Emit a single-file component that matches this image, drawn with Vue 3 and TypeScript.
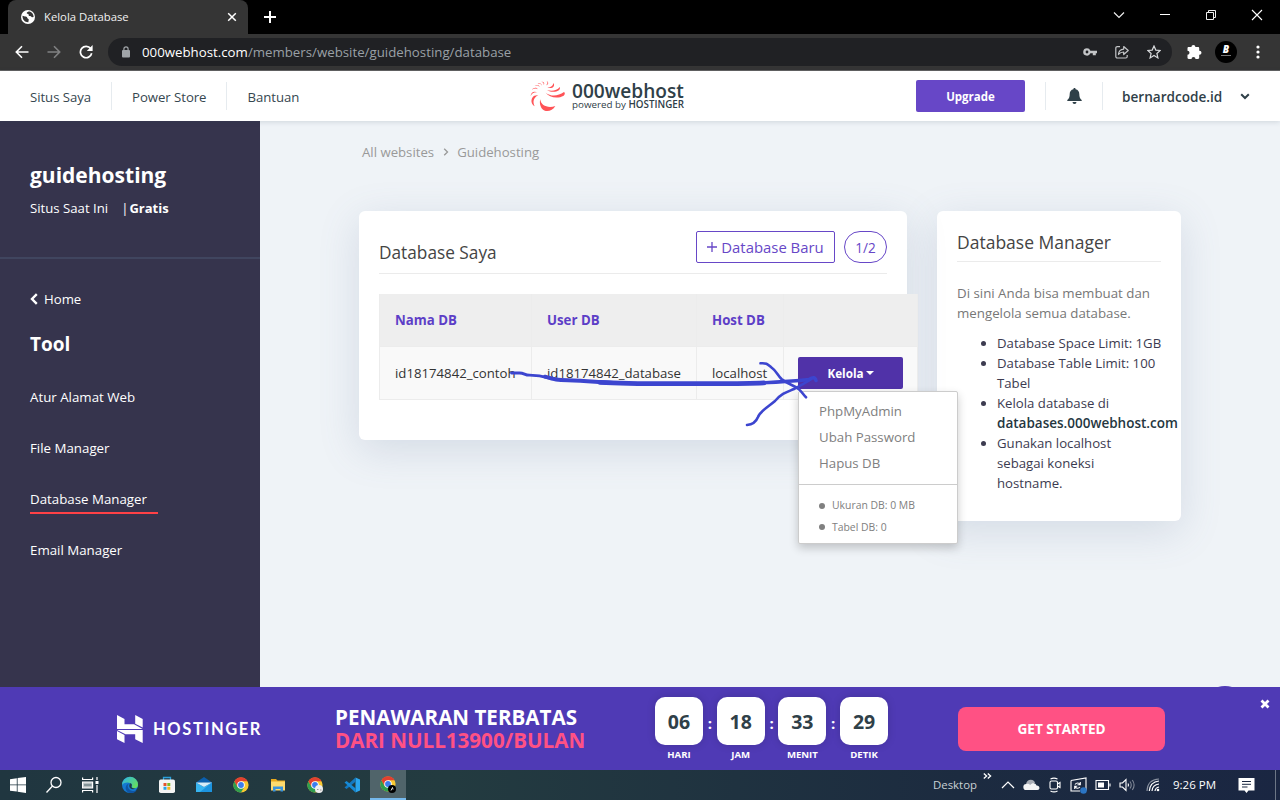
<script setup lang="ts">
import { ref } from 'vue'

interface Unit {
  value: string
  label: string
}

const navLinks = ['Situs Saya', 'Power Store', 'Bantuan']
const tools = ['Atur Alamat Web', 'File Manager', 'Database Manager', 'Email Manager']
const activeTool = ref('Database Manager')
const menuOpen = ref(true)

const columns = ['Nama DB', 'User DB', 'Host DB', '']
const database = { name: 'id18174842_contoh', user: 'id18174842_database', host: 'localhost' }
const actions = ['PhpMyAdmin', 'Ubah Password', 'Hapus DB']
const stats = ['Ukuran DB: 0 MB', 'Tabel DB: 0']

const countdown: Unit[] = [
  { value: '06', label: 'HARI' },
  { value: '18', label: 'JAM' },
  { value: '33', label: 'MENIT' },
  { value: '29', label: 'DETIK' },
]
</script>

<template>
  <div class="screen">
    <svg class="defs" width="0" height="0">
      <symbol id="chrome" viewBox="0 0 16 16">
        <circle cx="8" cy="8" r="7.6" fill="#f9c932" />
        <path d="M8 8 1.4 4.2A7.6 7.6 0 0 1 14.6 4.2H8z" fill="#e2402f" />
        <path d="M1.4 4.2A7.6 7.6 0 0 0 8 15.6l3.3-5.7L8 8 4.7 9.9z" fill="#2f9e4f" />
        <path d="M1.4 4.2 4.7 9.9 8 4.2z" fill="#e2402f" />
        <circle cx="8" cy="8" r="3.8" fill="#fff" />
        <circle cx="8" cy="8" r="2.9" fill="#3b7ded" />
      </symbol>
    </svg>

    <div class="tabs">
      <div class="tab">
        <svg width="14" height="14" viewBox="0 0 14 14">
          <circle cx="7" cy="7" r="7" fill="#fff" />
          <path d="M1.500 5.800 4 6.600c1.500 0 2.300.5 2.200 1.500L7.800 9.500 7.300 12.300C3.800 12.400 1.300 9.500 1.500 5.800z" fill="#353535" />
          <path d="M7.500 1.600c-1 .7-2 .8-1.700 1.900.9.6 1.900.3 1.900 1.200-.3.900.3 1.400 1.500 1.400.9 0 1 1.200 1.900 1.200l1.500-.3C12.500 4 10.500 1.500 7.500 1.600z" fill="#353535" />
        </svg>
        <span class="tab__title">Kelola Database</span>
        <svg class="tab__close" width="10" height="10" viewBox="0 0 10 10">
          <path d="M1.200 1.200 8.800 8.800M8.800 1.200 1.200 8.800" stroke="#fff" stroke-width="1.500" />
        </svg>
      </div>
      <svg class="tabs__new" width="12" height="12" viewBox="0 0 12 12">
        <path d="M6 0v12M0 6h12" stroke="#fff" stroke-width="2" />
      </svg>
      <div class="window-controls">
        <svg width="12" height="12" viewBox="0 0 12 12"><path d="m1 3.500 5 5 5-5" fill="none" stroke="#eee" stroke-width="1.200" /></svg>
        <svg width="12" height="12" viewBox="0 0 12 12"><path d="M1 5.500h10" stroke="#fff" /></svg>
        <svg width="12" height="12" viewBox="0 0 12 12"><path d="M1.500 3.500h7v7h-7zM3.500 3V1.500h7v7H9" fill="none" stroke="#eee" /></svg>
        <svg width="12" height="12" viewBox="0 0 12 12"><path d="m1 1 10 10M11 1 1 11" stroke="#fff" stroke-width="1.100" /></svg>
      </div>
    </div>

    <div class="toolbar">
      <svg width="14" height="14" viewBox="0 0 14 14"><path d="M13.500 7H1.500M7 1.300 1.300 7 7 12.700" fill="none" stroke="#fff" stroke-width="1.600" /></svg>
      <svg width="14" height="14" viewBox="0 0 14 14"><path d="M.5 7h12M7 1.300 12.700 7 7 12.700" fill="none" stroke="#808182" stroke-width="1.600" /></svg>
      <svg width="14" height="14" viewBox="0 0 14 14">
        <path d="M11.700 3.600A5.700 5.700 0 1 0 12.700 8.200" fill="none" stroke="#fff" stroke-width="1.700" />
        <path d="M13.600 0v6H7.800z" fill="#fff" />
      </svg>
      <div class="omnibox">
        <svg class="omnibox__lock" width="8" height="12" viewBox="0 0 8 12">
          <rect y="4" width="8" height="7.500" rx="1" fill="#a0a4a8" />
          <path d="M1.900 4.500V3a2.100 2.100 0 0 1 4.200 0v1.500" fill="none" stroke="#a0a4a8" stroke-width="1.200" />
        </svg>
        <span class="omnibox__url"><b>000webhost.com</b>/members/website/guidehosting/database</span>
        <div class="omnibox__icons">
          <svg width="14" height="14" viewBox="0 0 14 14">
            <path d="M4 3.300a3.700 3.700 0 1 0 3.400 5H9.800v2h3V8.300H14V5.700H7.400A3.700 3.700 0 0 0 4 3.300zm0 2.300a1.400 1.400 0 1 1 0 2.800 1.400 1.400 0 0 1 0-2.800z" fill="#c3c5c7" fill-rule="evenodd" />
          </svg>
          <svg width="14" height="14" viewBox="0 0 14 14" fill="none" stroke="#c3c5c7" stroke-width="1.200">
            <path d="M5 1.600H2.300A1.500 1.500 0 0 0 .8 3.100v8.400A1.500 1.500 0 0 0 2.300 13h8.400a1.500 1.500 0 0 0 1.500-1.500V10" />
            <path d="M3.500 9.500C3.700 6 5.500 4.300 8.700 4.100V1.500l4.500 4-4.500 4V7C6.400 7 4.900 7.700 3.500 9.500z" stroke-linejoin="round" />
          </svg>
          <svg width="14" height="14" viewBox="0 0 14 14">
            <path d="m7 1 1.800 4.100 4.400.4-3.300 3 1 4.400L7 10.500 3.100 12.900l1-4.400-3.300-3 4.400-.4z" fill="none" stroke="#d8dadc" stroke-width="1.200" />
          </svg>
        </div>
      </div>
      <svg width="16" height="16" viewBox="0 0 16 16">
        <path d="M1.500 4.200c0-.7.500-1.200 1.200-1.200h2.700a2 2 0 0 1 4 0h2.600c.7 0 1.200.5 1.200 1.200v2.600h.3a2 2 0 0 1 0 4h-.3v3c0 .7-.5 1.200-1.200 1.200H9.500a2 2 0 0 0-4 0H2.700c-.7 0-1.200-.5-1.200-1.200v-3a2 2 0 0 0 0-4z" fill="#fff" />
      </svg>
      <div class="avatar"><i>B</i><small></small></div>
      <svg width="4" height="14" viewBox="0 0 4 14" fill="#fff"><circle cx="2" cy="2" r="1.600" /><circle cx="2" cy="7" r="1.600" /><circle cx="2" cy="12" r="1.600" /></svg>
    </div>

    <header class="header">
      <nav class="header__nav">
        <a v-for="link in navLinks" :key="link">{{ link }}</a>
      </nav>
      <div class="brand">
        <svg width="36" height="32" viewBox="90 30 108 96" fill="#ff5357">
          <path d="M137 68c15 12 37 11 55-2 4 3 3 8-1 11-18 10-43 6-54-9z" />
          <path d="M121 88c1 20 24 27 45 20-9 16-30 20-40 8-6-8-8-19-5-28z" />
          <path d="M115 76c-14 6-18 19-11 33-10-6-12-18-7-26 4-6 10-8 18-7z" />
          <path d="M112 67c-10-1-17 3-20 12 0-10 8-17 20-12z" />
          <path d="M114 58c-6-4-12-3-18 1 5-7 14-8 18-1z" />
          <path d="M119 51c-3-5-9-6-15-3 6-5 14-4 15 3z" />
          <path d="M125 47c-1-4-6-7-12-6 6-4 13 0 12 6z" />
          <path d="M131 45c1-5-1-8-7-10 8 0 11 5 7 10z" />
          <path d="M138 46c5-4 6-8 2-13 7 4 6 11-2 13z" />
          <path d="M142 53c11-1 17-5 18-14 7 9-3 19-18 14z" />
          <path d="M141 60c14 5 30 2 38-9 6 13-22 20-38 9z" />
        </svg>
        <div class="brand__text">
          <strong>000webhost</strong>
          <span>powered by <b>HOSTINGER</b></span>
        </div>
      </div>
      <div class="header__right">
        <button class="upgrade" type="button">Upgrade</button>
        <div class="bell">
          <svg width="15" height="16" viewBox="0 0 15 16" fill="#2f4048">
            <path d="M7.500 0c.7 0 1.100.5 1.100 1.200 2.400.5 3.700 2.400 3.700 4.800 0 3.200.8 4.700 2.400 6v1H.3v-1c1.600-1.300 2.400-2.800 2.400-6 0-2.400 1.300-4.300 3.700-4.800C6.400.5 6.800 0 7.500 0zM5.500 14h4a2 2 0 0 1-4 0z" />
          </svg>
        </div>
        <div class="account">
          <span>bernardcode.id</span>
          <svg width="10" height="7" viewBox="0 0 10 7"><path d="m1.200 1.200 3.800 3.800 3.800-3.800" fill="none" stroke="#2f4048" stroke-width="2" /></svg>
        </div>
      </div>
    </header>

    <div class="body">
      <aside class="sidebar">
        <div class="sidebar__site">
          <h1>guidehosting</h1>
          <p><span>Situs Saat Ini</span><span class="plan">|<b>Gratis</b></span></p>
        </div>
        <div class="sidebar__home">
          <svg width="8" height="12" viewBox="0 0 8 12"><path d="M6.800 1.200 2 6l4.800 4.800" fill="none" stroke="#fff" stroke-width="2.400" /></svg>
          <span>Home</span>
        </div>
        <h2>Tool</h2>
        <ul class="sidebar__tools">
          <li v-for="tool in tools" :key="tool">
            <a :class="{ active: tool === activeTool }" @click="activeTool = tool">{{ tool }}</a>
          </li>
        </ul>
      </aside>

      <main class="main">
        <div class="crumbs">
          <span>All websites</span>
          <svg width="6" height="8" viewBox="0 0 6 8"><path d="m1.200.8 3.300 3.200-3.300 3.200" fill="none" stroke="#999" stroke-width="1.300" /></svg>
          <span>Guidehosting</span>
        </div>
        <div class="cards">
          <section class="card card--list">
            <div class="card__head">
              <h3>Database Saya</h3>
              <button class="add" type="button">
                <svg width="10" height="10" viewBox="0 0 10 10"><path d="M5 0v10M0 5h10" stroke="#6747c7" stroke-width="1.300" /></svg>
                <span>Database Baru</span>
              </button>
              <span class="quota">1/2</span>
            </div>
            <div class="table">
              <div class="table__row table__row--head">
                <div v-for="column in columns" :key="column">{{ column }}</div>
              </div>
              <div class="table__row">
                <div>{{ database.name }}</div>
                <div>{{ database.user }}</div>
                <div>{{ database.host }}</div>
                <div class="manage">
                  <button class="manage__button" type="button" @click="menuOpen = !menuOpen">
                    Kelola
                    <svg width="8" height="4" viewBox="0 0 8 4"><path d="M0 0h8L4 4z" fill="#fff" /></svg>
                  </button>
                  <div v-if="menuOpen" class="menu">
                    <ul class="menu__actions">
                      <li v-for="action in actions" :key="action">{{ action }}</li>
                    </ul>
                    <ul class="menu__stats">
                      <li v-for="stat in stats" :key="stat">{{ stat }}</li>
                    </ul>
                  </div>
                </div>
              </div>
            </div>
          </section>

          <section class="card card--info">
            <h3>Database Manager</h3>
            <p>Di sini Anda bisa membuat dan<br>mengelola semua database.</p>
            <ul>
              <li>Database Space Limit: 1GB</li>
              <li>Database Table Limit: 100<br>Tabel</li>
              <li>Kelola database di<br><b>databases.000webhost.com</b></li>
              <li>Gunakan localhost<br>sebagai koneksi<br>hostname.</li>
            </ul>
          </section>
        </div>
        <div class="chat"></div>
      </main>
    </div>

    <section class="promo">
      <div class="promo__brand">
        <svg width="26" height="28" viewBox="0 0 26 28" fill="#fff">
          <path d="M0 0 7.500 4v5.300h9.500L25.700 14H0zM18.200 0l7.500 4v8.500L18.200 8.800zM0 15h17l8.700 0v13l-7.500-3.800V19.200H8.500z" />
          <path d="M0 16l7.500 4v8L0 24.200z" />
        </svg>
        <span>HOSTINGER</span>
      </div>
      <div class="promo__text">
        <span>PENAWARAN TERBATAS</span>
        <em>DARI NULL13900/BULAN</em>
      </div>
      <div class="countdown">
        <div v-for="unit in countdown" :key="unit.label" class="countdown__unit">
          <strong>{{ unit.value }}</strong>
          <span>{{ unit.label }}</span>
        </div>
      </div>
      <button class="promo__cta" type="button">GET STARTED</button>
      <svg class="promo__close" width="10" height="10" viewBox="0 0 10 10"><path d="m1.500 1.500 7 7M8.500 1.500l-7 7" stroke="#fff" stroke-width="2.800" /></svg>
    </section>

    <footer class="taskbar">
      <div class="taskbar__apps">
        <div class="app">
          <svg width="18" height="18" viewBox="0 0 18 18" fill="#fff"><path d="M1 3.200 7.800 2.200v6.300H1zM8.600 2.100 17 .900v7.600H8.600zM1 9.300h6.800v6.300L1 14.700zM8.600 9.300H17v7.600l-8.400-1.200z" /></svg>
        </div>
        <div class="app">
          <svg width="18" height="18" viewBox="0 0 18 18" fill="none" stroke="#fff" stroke-width="1.300"><circle cx="11" cy="6.500" r="5" /><path d="m7.500 10-6 6.500" /></svg>
        </div>
        <div class="app">
          <svg width="18" height="18" viewBox="0 0 18 18" fill="none" stroke="#fff" stroke-width="1.200">
            <path d="M1.600 1.500v2h10v-2M1.600 16.500v-2h10v2M16 1v3M16 9v8" /><path d="M1.600 6h10v6h-10z" fill="#b8c0c2" /><path d="M3 9h7.500" stroke="#60757c" /><path d="M14.500 6.500h3" stroke-width="3" />
          </svg>
        </div>
        <div class="app">
          <svg width="18" height="18" viewBox="0 0 18 18">
            <defs>
              <linearGradient id="edge-top" x1="0" x2="1" y1="0" y2=".6"><stop offset="0" stop-color="#2bb2ee" /><stop offset="1" stop-color="#64dc61" /></linearGradient>
            </defs>
            <circle cx="9" cy="9" r="8" fill="#1479d1" />
            <path d="M1 9a8 8 0 0 1 16-.3c.1 2.700-2 3.800-4.300 3.500-2.400-.3-1.600-1.500-1.600-3.200C10.800 6.700 4.200 5 1 9z" fill="url(#edge-top)" />
            <path d="M9.500 6.900c-3.600.4-4.300 6.300 2 8 1.700.3 3.200-.1 4.300-.6C13 18 8 17.800 5.800 15.200 3.500 12 4.800 7.600 9.500 6.900z" fill="#0f55a4" />
            <path d="M9.600 7.300c1.300.7 1.500 1.600.9 2.800-.6 1.200.7 2.600 3.700 2.500-2.300 1.500-5.700 0-5.900-2.400-.1-1.200.4-2.200 1.300-2.900z" fill="#233b40" />
          </svg>
        </div>
        <div class="app">
          <svg width="18" height="18" viewBox="0 0 18 18">
            <path d="M5.500 4V1.500h7V4" fill="none" stroke="#2ba0dc" stroke-width="1.300" /><rect x="1" y="3.500" width="16" height="13.500" rx="1.800" fill="#f4f4f4" />
            <path d="M5.500 7h3v3h-3z" fill="#e6532c" /><path d="M9.300 7h3v3h-3z" fill="#7fb927" /><path d="M5.500 10.800h3v3h-3z" fill="#2aa2e6" /><path d="M9.300 10.800h3v3h-3z" fill="#f7b51b" />
          </svg>
        </div>
        <div class="app">
          <svg width="18" height="18" viewBox="0 0 18 18">
            <path d="M1 6.500 9 1l8 5.500v5H1z" fill="#0b5fae" /><path d="M3 6.500h12v5H3z" fill="#0f4f94" /><path d="M1 6.500 9 11l8-4.500V16H1z" fill="#37b4f0" /><path d="M1 6.500h16L9 11z" fill="#d6ecf8" /><path d="M17 6.500 5 16h12z" fill="#1c93df" />
          </svg>
        </div>
        <div class="app"><svg width="16" height="16"><use href="#chrome" /></svg></div>
        <div class="app">
          <svg width="16" height="16" viewBox="0 0 16 16"><path d="M1 2h5l1.500 1.500H15V13H1z" fill="#e9a91c" /><path d="M1 4.500h14V13.500H1z" fill="#fddb6e" /><path d="M3 14.500V9.500h10v5h-2.500V12h-5v2.500z" fill="#3894dd" /></svg>
        </div>
        <div class="app">
          <svg width="16" height="16"><use href="#chrome" /></svg>
          <svg class="app__badge" width="8" height="8" viewBox="0 0 8 8"><circle cx="4" cy="4" r="4" fill="#eee" /><path d="M2 4.500h1.500M5 5h1.500" stroke="#999" /></svg>
        </div>
        <div class="app">
          <svg width="18" height="18" viewBox="0 0 18 18">
            <path d="M12.500 1.500 17 3.500v11l-4.500 2z" fill="#2aa5ee" /><path d="M12.500 1.500v4.300L3.600 13 1.500 11.500z" fill="#1478c0" /><path d="M12.500 16.500v-4.300L3.600 5 1.500 6.500z" fill="#168ad6" />
          </svg>
        </div>
        <div class="app app--active">
          <svg width="16" height="16"><use href="#chrome" /></svg>
          <svg class="app__badge" width="8" height="8" viewBox="0 0 8 8"><circle cx="4" cy="4" r="4" fill="#000" /><path d="M3 5.500 4.500 2.500 5 4.500" stroke="#ddd" fill="none" /></svg>
        </div>
      </div>
      <div class="tray">
        <span class="tray__desktop">Desktop</span>
        <svg class="tray__more" width="9" height="6" viewBox="0 0 9 6"><path d="m.8.500 2.800 2.500L.8 5.500M4.800.5l2.800 2.500-2.800 2.500" fill="none" stroke="#fff" stroke-width="1.300" /></svg>
        <svg width="14" height="14" viewBox="0 0 14 14"><path d="m1 10 6-6 6 6" fill="none" stroke="#fff" stroke-width="1.200" /></svg>
        <svg width="17" height="14" viewBox="0 0 17 14"><path d="M3.500 8A4.500 4.500 0 0 1 12 4.500L8 9z" fill="#a9adb5" /><path d="M3.500 12a3 3 0 0 1-.3-6c1.500-.6 3 0 4 1 2-2.500 5.500-2 6.300.5 3.500-.2 4 4.300.8 4.500z" fill="#f4f4f4" /></svg>
        <svg width="14" height="16" viewBox="0 0 14 16" fill="none" stroke="#fff" stroke-width="1.100"><rect x="2" y="4" width="7.500" height="8" rx="1.500" /><path d="M9.500 7 12 5.500v5L9.500 9M2.500 2Q6 .2 9.500 2M2.500 14Q6 15.800 9.500 14" /></svg>
        <svg width="17" height="17" viewBox="0 0 17 17" fill="none" stroke="#fff" stroke-width="1.100">
          <path d="M1 3.500 16 1v12.500M1 3.500V14h9" /><path d="M5 7.500c1.500-2 4-2 5 0M10.300 5v2.800H7.500M10 10c-1.500 1.800-4 1.500-5-.5M4.700 12V9.200h2.500" /><circle cx="13.500" cy="13.500" r="3.300" fill="#2b75c4" stroke="none" />
        </svg>
        <svg width="16" height="12" viewBox="0 0 16 12"><path d="M1 1.500h12.500v9H1zM15 4.500v3" fill="none" stroke="#fff" stroke-width="1.100" /><path d="M3 3.500h6v5H3z" fill="#fff" /></svg>
        <svg width="17" height="14" viewBox="0 0 17 14" fill="none" stroke="#fff" stroke-width="1.100"><path d="M1 5h2.500L7 1.500v11L3.500 9H1z" /><path d="M9 5.500q1 1.500 0 3" /><path d="M11 3.500q2.500 3.500 0 7M13.300 2q3.600 5 0 10" stroke="#7f8795" /></svg>
        <svg class="tray__wifi" width="14" height="14" viewBox="0 0 14 14" fill="none" stroke="#fff" stroke-width="1.200"><path d="M9 13q.5-3.500 4-4M6 13q.5-6.300 7-7M3.300 13Q4 4 13 3" /><path d="M1 13Q1.500 1.500 13 1" stroke="#8a92a0" /><circle cx="12" cy="12" r="1.300" fill="#fff" stroke="none" /></svg>
        <span class="tray__clock">9:26 PM</span>
        <svg width="17" height="17" viewBox="0 0 17 17"><path d="M.5 1h16v12.500H10.500L8.500 16l-2-2.500h-6z" fill="#fff" /><path d="M4 4.500h9M4 7.300h9M4 10h5.500" stroke="#1b2842" /></svg>
      </div>
    </footer>

    <!-- hand-drawn arrow pointing at the Kelola button -->
    <svg class="scribble" width="320" height="80" viewBox="505 355 320 80" fill="none" stroke="#3c45cf" stroke-linecap="round" stroke-linejoin="round">
      <path d="M511.500 373h8c5 0 5 2.200 10 2.200 8 0 11 .3 20 3" stroke-width="2.800" />
      <path d="M545 376.700c10 3 12 3.500 23 3.500 20 .5 30 2 50 2.800" stroke-width="4" />
      <path d="M600 382.300c30 1.800 60 1.300 100 1.300 25 0 45 .2 64-.8" stroke-width="4.800" />
      <path d="M760 383c20-1 35-2 49-3.500 4-2.500 6-2.500 7 1" stroke-width="3.400" />
      <path d="M760.500 363.300c6-.5 7 .8 11 4.200 5 3.500 6 7.500 10 11.500 5 4.500 11 5.500 17 10 3 2 4 5 7.500 8.300" stroke-width="2.600" />
      <path d="M747 425c6-.5 9-3 11-8 2-6 10-10 17-16 7-8 12-9 19-12 7-4 12-6 17-10" stroke-width="2.600" />
    </svg>
  </div>
</template>

<style>
body {
  margin: 0;
  overflow: hidden;
}
</style>

<style scoped>
* {
  box-sizing: border-box;
}

.screen {
  position: relative;
  display: flex;
  flex-direction: column;
  width: 1280px;
  height: 800px;
  overflow: hidden;
  font-family: "Open Sans", "Noto Sans", sans-serif;
  font-size: 13.200px;
  line-height: 20px;
  white-space: nowrap;
}

.defs {
  position: absolute;
}

svg {
  display: block;
  flex-shrink: 0;
}

h1, h2, h3, p, ul {
  margin: 0;
  padding: 0;
}

ul {
  list-style: none;
}

button {
  border: none;
  padding: 0;
  font-family: inherit;
  line-height: inherit;
  cursor: pointer;
}

/* browser chrome */
.tabs {
  display: flex;
  flex-shrink: 0;
  height: 34px;
  padding-left: 8px;
  background: #000;
}

.tab {
  display: flex;
  align-items: center;
  width: 240px;
  padding: 0 11px 0 13px;
  background: #353535;
  border-radius: 8px 8px 0 0;
}

.tab__title {
  flex: 1;
  margin-left: 9px;
  font-size: 11.300px;
  color: #f1f1f1;
}

.tabs__new {
  margin: 11px 0 0 16px;
}

.window-controls {
  display: flex;
  gap: 34px;
  margin: 9px 17px 0 auto;
}

.toolbar {
  display: flex;
  flex-shrink: 0;
  align-items: center;
  height: 37px;
  padding: 0 20px 1px 15px;
  background: #353535;
  border-bottom: 1px solid #626262;
}

.toolbar > svg + svg {
  margin-left: 18px;
}

.omnibox {
  display: flex;
  align-items: center;
  width: 1064px;
  height: 28px;
  margin: 0 14px 0 15px;
  padding: 0 11px 0 14px;
  border-radius: 14px;
  background: #202124;
}

.omnibox__url {
  margin-left: 12px;
  color: #9aa0a6;
  font-size: 13.280px;
}

.omnibox__url b {
  font-weight: 400;
  color: #fff;
}

.omnibox__icons {
  display: flex;
  gap: 18px;
  margin-left: auto;
}

.avatar {
  display: flex;
  flex-direction: column;
  align-items: center;
  width: 22px;
  height: 22px;
  margin: 0 19px 0 13px;
  padding-top: 3px;
  border-radius: 50%;
  background: #000;
  color: #fff;
  font-size: 10px;
  font-weight: 800;
  line-height: 10px;
}

.avatar small {
  width: 10px;
  height: 1px;
  margin-top: 1px;
  background: #777;
}

/* site header */
.header {
  position: relative;
  z-index: 1;
  display: flex;
  flex-shrink: 0;
  align-items: center;
  height: 50px;
  background: #fff;
  box-shadow: 0 1px 5px rgba(40, 60, 80, 0.16);
  color: #36474f;
}

.header__nav {
  display: flex;
  width: 530px;
  padding-left: 10px;
}

.header__nav a {
  padding: 5px 20px 3px;
  font-size: 13.200px;
  letter-spacing: -0.050px;
}

.header__nav a + a {
  border-left: 1px solid #e6ebef;
}

.brand {
  display: flex;
  align-items: center;
  width: 386px;
  gap: 6px;
}

.brand__text {
  display: flex;
  flex-direction: column;
  color: #2f4048;
}

.brand__text strong {
  font-size: 19.100px;
  font-weight: 600;
  line-height: 17px;
}

.brand__text span {
  font-size: 9.800px;
  line-height: 10px;
}

.brand__text b {
  font-weight: 600;
}

.header__right {
  display: flex;
  flex: 1;
  align-items: center;
}

.upgrade {
  width: 109px;
  height: 32px;
  padding-top: 1px;
  border-radius: 2px;
  background: #6747c7;
  color: #fff;
  font-size: 11.500px;
  font-weight: 700;
}

.bell {
  display: flex;
  align-items: center;
  justify-content: center;
  width: 58px;
  height: 28px;
  margin-left: 20px;
  border: solid #e6ebef;
  border-width: 0 1px;
}

.account {
  display: flex;
  flex: 1;
  align-items: center;
  justify-content: space-between;
  padding: 1px 30px 0 19px;
  font-weight: 600;
  font-size: 13.600px;
  color: #2f4048;
}

/* page body */
.body {
  display: flex;
  flex-shrink: 0;
  height: 566px;
}

.sidebar {
  width: 260px;
  flex-shrink: 0;
  background: #36344d;
  color: #fff;
}

.sidebar__site {
  height: 138px;
  padding: 39px 30px 0;
  border-bottom: 2px solid #40455f;
}

.sidebar h1 {
  font-size: 21px;
  line-height: 30px;
  font-weight: 700;
}

.sidebar__site p {
  display: flex;
  gap: 13px;
  margin-top: 8px;
}

.plan b {
  margin-left: 1px;
  font-size: 13px;
}

.sidebar__home {
  display: flex;
  align-items: center;
  gap: 6px;
  margin: 30px 30px 0;
}

.sidebar h2 {
  margin: 20px 30px 0;
  font-size: 19px;
  line-height: 30px;
  font-weight: 700;
}

.sidebar__tools {
  display: flex;
  flex-direction: column;
  gap: 25px;
  margin: 25px 30px 0;
}

.sidebar__tools li {
  height: 26px;
  font-size: 13.300px;
}

.sidebar__tools a {
  display: inline-block;
  height: 26px;
  line-height: 26px;
}

.sidebar__tools .active {
  width: 128px;
  height: 28px;
  border-bottom: 2px solid #ff4146;
}

.main {
  position: relative;
  flex: 1;
  overflow: hidden;
  background: #eff3f7;
}

.crumbs {
  display: flex;
  align-items: center;
  gap: 8.500px;
  margin: 21px 0 0 102px;
  color: #999;
}

.cards {
  display: flex;
  align-items: flex-start;
  gap: 30px;
  margin: 49px 0 0 99px;
}

.card {
  border-radius: 6px;
  background: #fff;
  box-shadow: 0 10px 40px rgba(90, 110, 150, 0.18);
}

.card h3 {
  font-size: 17.250px;
  font-weight: 400;
  color: #444;
}

.card--list {
  position: relative;
  z-index: 1;
  width: 548px;
  height: 229px;
  padding: 20px;
}

.card__head {
  display: flex;
  height: 43px;
  border-bottom: 1px solid #ebebeb;
}

.card__head h3 {
  flex: 1;
  padding-top: 12px;
}

.add {
  display: flex;
  align-items: center;
  justify-content: center;
  gap: 4px;
  width: 139px;
  height: 32px;
  border: 1px solid #6747c7;
  border-radius: 2px;
  background: #fff;
  color: #6747c7;
  font-size: 14.900px;
}

.quota {
  width: 43px;
  height: 32px;
  margin-left: 9px;
  border: 1px solid #6747c7;
  border-radius: 16px;
  color: #6747c7;
  font-size: 13.600px;
  line-height: 31px;
  text-align: center;
}

.table {
  width: 539px;
  margin-top: 20px;
  border-left: 1px solid #ececec;
}

.table__row {
  display: grid;
  grid-template-columns: 152px 165px 87px 134px;
  height: 53px;
  border-bottom: 1px solid #ececec;
  background: #f9f9f9;
  color: #333;
}

.table__row > div {
  padding: 0 15px;
  line-height: 52px;
  border-right: 1px solid #ececec;
}

.table__row--head {
  background: #eee;
  color: #5d3ec7;
  font-size: 13.250px;
  font-weight: 700;
}

.table__row > .manage {
  position: relative;
  padding: 0 14px;
}

.manage__button {
  display: flex;
  align-items: center;
  justify-content: center;
  gap: 2px;
  width: 105px;
  height: 32px;
  margin-top: 10px;
  border-radius: 2px;
  background: #5032a8;
  color: #fff;
  font-size: 11.700px;
  font-weight: 700;
}

.menu {
  position: absolute;
  top: 44px;
  left: 14px;
  width: 160px;
  height: 153px;
  border: 1px solid #ccc;
  border-radius: 2px;
  background: #fff;
  box-shadow: 0 4px 10px rgba(0, 0, 0, 0.2);
  color: #808080;
}

.menu__actions {
  height: 93px;
  padding: 6px 20px 0;
  border-bottom: 1px solid #ccc;
  font-size: 13.250px;
  line-height: 26px;
}

.menu__stats {
  padding: 10px 20px 0;
  font-size: 10.400px;
  line-height: 21.500px;
}

.menu__stats li {
  display: flex;
  align-items: center;
  gap: 7px;
}

.menu__stats li::before {
  content: '';
  width: 6px;
  height: 6px;
  border-radius: 50%;
  background: #808080;
}

.card--info {
  width: 244px;
  height: 310px;
  padding: 20px;
}

.card--info h3 {
  height: 31px;
  font-size: 17.500px;
  border-bottom: 1px solid #ebebeb;
  line-height: 22px;
}

.card--info p {
  margin-top: 21px;
  color: #777;
  font-size: 13.300px;
}

.card--info ul {
  margin-top: 10px;
  padding-left: 40px;
  list-style: disc;
  line-height: 20px;
  color: #3c3b50;
}

.card--info b {
  font-weight: 600;
  font-size: 13.500px;
  color: #25373f;
}

.chat {
  position: absolute;
  right: 30px;
  bottom: -49px;
  width: 50px;
  height: 50px;
  border-radius: 50%;
  background: #4f3ab5;
}

/* offer strip */
.promo {
  display: flex;
  flex-shrink: 0;
  height: 83px;
  background: #4f3ab5;
  color: #fff;
}

.promo__brand {
  display: flex;
  align-items: center;
  gap: 10px;
  width: 335px;
  padding-left: 117px;
  font-family: Lato, sans-serif;
  font-size: 16.500px;
  font-weight: 700;
  letter-spacing: 1.600px;
}

.promo__text {
  display: flex;
  flex-direction: column;
  width: 320px;
  padding-top: 19px;
  font-size: 20.600px;
  line-height: 23px;
  font-weight: 700;
}

.promo__text em {
  font-style: normal;
  color: #ff5184;
}

.countdown {
  display: flex;
  gap: 13.700px;
  width: 303px;
  padding-top: 10px;
}

.countdown__unit {
  position: relative;
  width: 48px;
  text-align: center;
}

.countdown__unit strong {
  display: block;
  height: 48px;
  border-radius: 10px;
  background: #fff;
  box-shadow: 0 0 8px rgba(0, 0, 0, 0.15);
  color: #2f4048;
  font-size: 19.500px;
  line-height: 49px;
}

.countdown__unit span {
  display: block;
  font-size: 9.600px;
  font-weight: 700;
}

.countdown__unit + .countdown__unit::before {
  content: ':';
  position: absolute;
  top: 16px;
  left: -9px;
  font-size: 15px;
  font-weight: 700;
}

.promo__cta {
  width: 207px;
  height: 44px;
  margin-top: 20px;
  border-radius: 8px;
  background: #ff5184;
  color: #fff;
  font-size: 13.600px;
  font-weight: 700;
}

.promo__close {
  margin: 12px 10px 0 auto;
}

/* windows taskbar */
.taskbar {
  display: flex;
  flex-shrink: 0;
  justify-content: space-between;
  height: 30px;
  background: linear-gradient(90deg, #203640, #233b40 35%, #1c2b40 75%, #1a2642);
  color: #fff;
}

.taskbar__apps {
  display: flex;
}

.app {
  position: relative;
  display: flex;
  align-items: center;
  justify-content: center;
  width: 37px;
}

.app:nth-child(-n + 3) {
  width: 36px;
}

.app:nth-child(3) {
  margin-right: 3px;
}

.app__badge {
  position: absolute;
  right: 10px;
  bottom: 7px;
}

.app--active {
  width: 36px;
  background: #50646a;
  border-bottom: 2px solid #76b9ed;
}

.app--active .app__badge {
  bottom: 5px;
}

.tray {
  display: flex;
  align-items: center;
  gap: 8px;
  margin-right: 4px;
  padding-right: 20px;
  border-right: 1px solid #6c7686;
}

.tray__desktop {
  font-size: 11.400px;
  color: #c9d0d4;
}

.tray__more {
  margin: -18px 1px 0 -2px;
}

.tray__wifi {
  margin-left: 2px;
}

.tray__clock {
  margin: 0 14px 0 5px;
  font-size: 11.500px;
}

.scribble {
  position: absolute;
  top: 355px;
  left: 505px;
  z-index: 5;
  pointer-events: none;
}
</style>
